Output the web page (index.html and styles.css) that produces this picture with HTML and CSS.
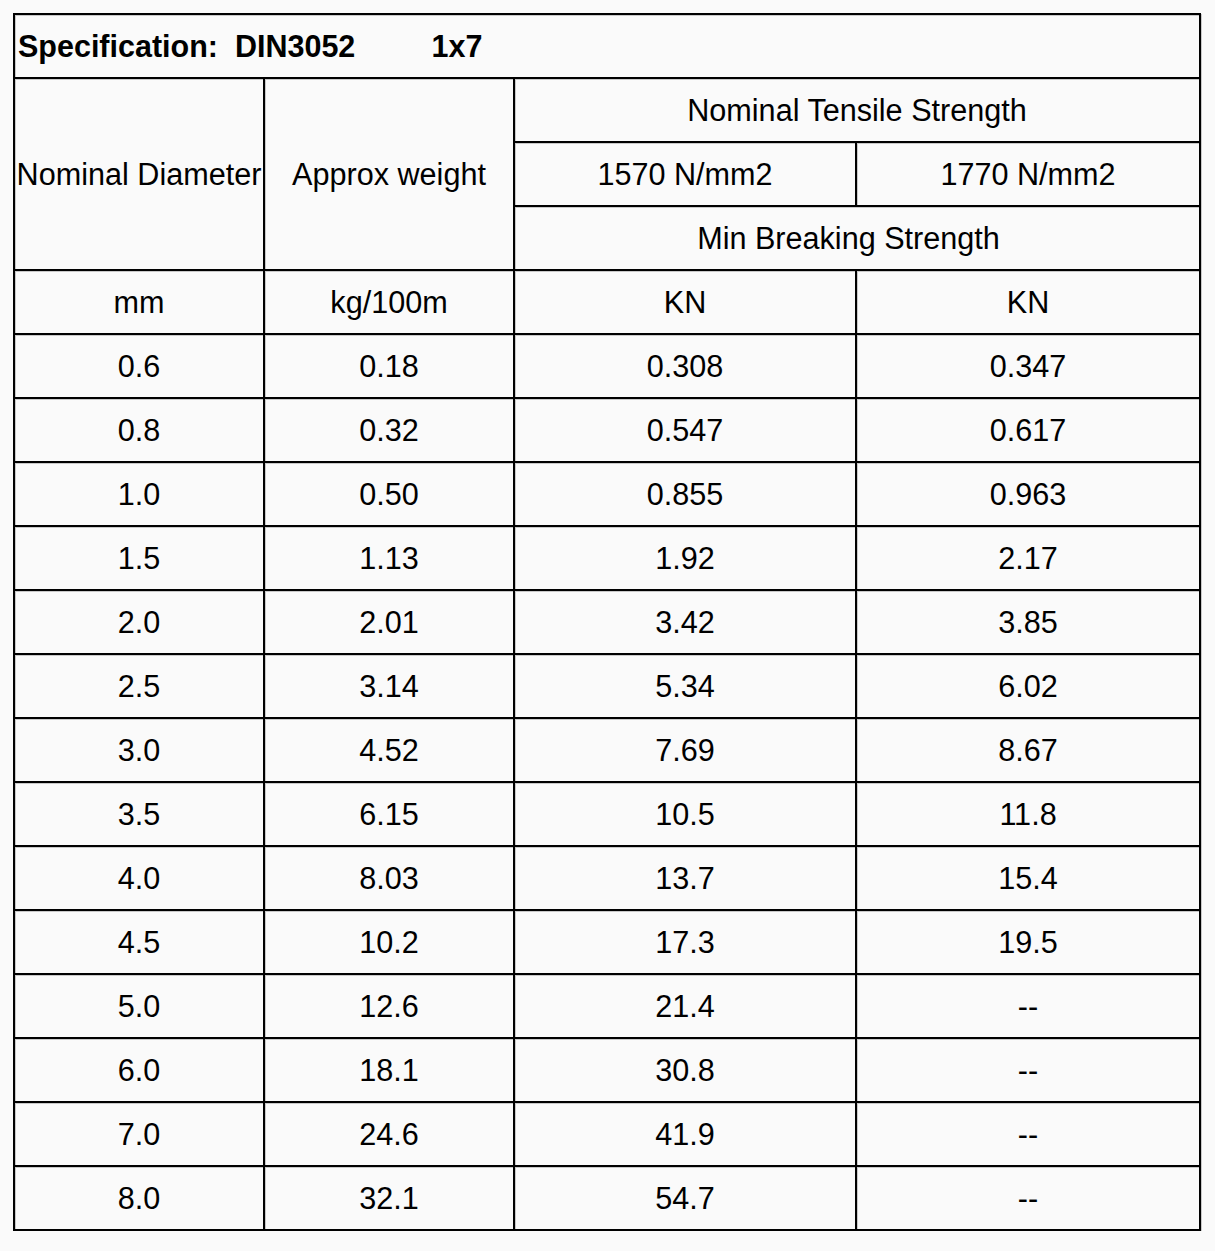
FILE: index.html
```html
<!DOCTYPE html>
<html>
<head>
<meta charset="utf-8">
<link rel="stylesheet" href="styles.css">
</head>
<body>
<table class="spec">
  <colgroup>
    <col class="c1"><col class="c2"><col class="c3"><col class="c4">
  </colgroup>
  <tr><td colspan="4" class="title">Specification:  DIN3052         1x7</td></tr>
  <tr>
    <td rowspan="3">Nominal Diameter</td>
    <td rowspan="3">Approx weight</td>
    <td colspan="2">Nominal Tensile Strength</td>
  </tr>
  <tr><td>1570 N/mm2</td><td>1770 N/mm2</td></tr>
  <tr><td colspan="2" class="pre">Min Breaking Strength  </td></tr>
  <tr><td>mm</td><td>kg/100m</td><td>KN</td><td>KN</td></tr>
  <tr><td>0.6</td><td>0.18</td><td>0.308</td><td>0.347</td></tr>
  <tr><td>0.8</td><td>0.32</td><td>0.547</td><td>0.617</td></tr>
  <tr><td>1.0</td><td>0.50</td><td>0.855</td><td>0.963</td></tr>
  <tr><td>1.5</td><td>1.13</td><td>1.92</td><td>2.17</td></tr>
  <tr><td>2.0</td><td>2.01</td><td>3.42</td><td>3.85</td></tr>
  <tr><td>2.5</td><td>3.14</td><td>5.34</td><td>6.02</td></tr>
  <tr><td>3.0</td><td>4.52</td><td>7.69</td><td>8.67</td></tr>
  <tr><td>3.5</td><td>6.15</td><td>10.5</td><td>11.8</td></tr>
  <tr><td>4.0</td><td>8.03</td><td>13.7</td><td>15.4</td></tr>
  <tr><td>4.5</td><td>10.2</td><td>17.3</td><td>19.5</td></tr>
  <tr><td>5.0</td><td>12.6</td><td>21.4</td><td>--</td></tr>
  <tr><td>6.0</td><td>18.1</td><td>30.8</td><td>--</td></tr>
  <tr><td>7.0</td><td>24.6</td><td>41.9</td><td>--</td></tr>
  <tr><td>8.0</td><td>32.1</td><td>54.7</td><td>--</td></tr>
</table>
</body>
</html>
```
FILE: styles.css
```css
html, body {
  margin: 0;
  padding: 0;
  background: #fafafa;
}
body {
  font-family: "Liberation Sans", Arial, Helvetica, sans-serif;
  color: #000;
}
.spec {
  margin: 13px 0 0 13px;
  box-sizing: border-box;
  width: 1188px;
  table-layout: fixed;
  border-collapse: separate;
  border-spacing: 0;
  border-top: 2px solid #000;
  border-left: 2px solid #000;
  box-shadow: inset 1px 1px 0 #c8c8c8, 1px 1px 0 #c8c8c8;
}
.c1 { width: 250px; }
.c2 { width: 250px; }
.c3 { width: 342px; }
.c4 { width: 344px; }
.spec td {
  box-sizing: border-box;
  height: 64px;
  padding: 0;
  border-right: 2px solid #000;
  border-bottom: 2px solid #000;
  box-shadow: 1px 1px 0 #c8c8c8;
  text-align: center;
  vertical-align: middle;
  font-size: 30.6px;
  line-height: 34px;
  white-space: nowrap;
}
.spec td.pre {
  white-space: pre;
}
.spec td.title {
  text-align: left;
  font-weight: bold;
  font-size: 30.5px;
  white-space: pre;
  padding-left: 3px;
}
```
